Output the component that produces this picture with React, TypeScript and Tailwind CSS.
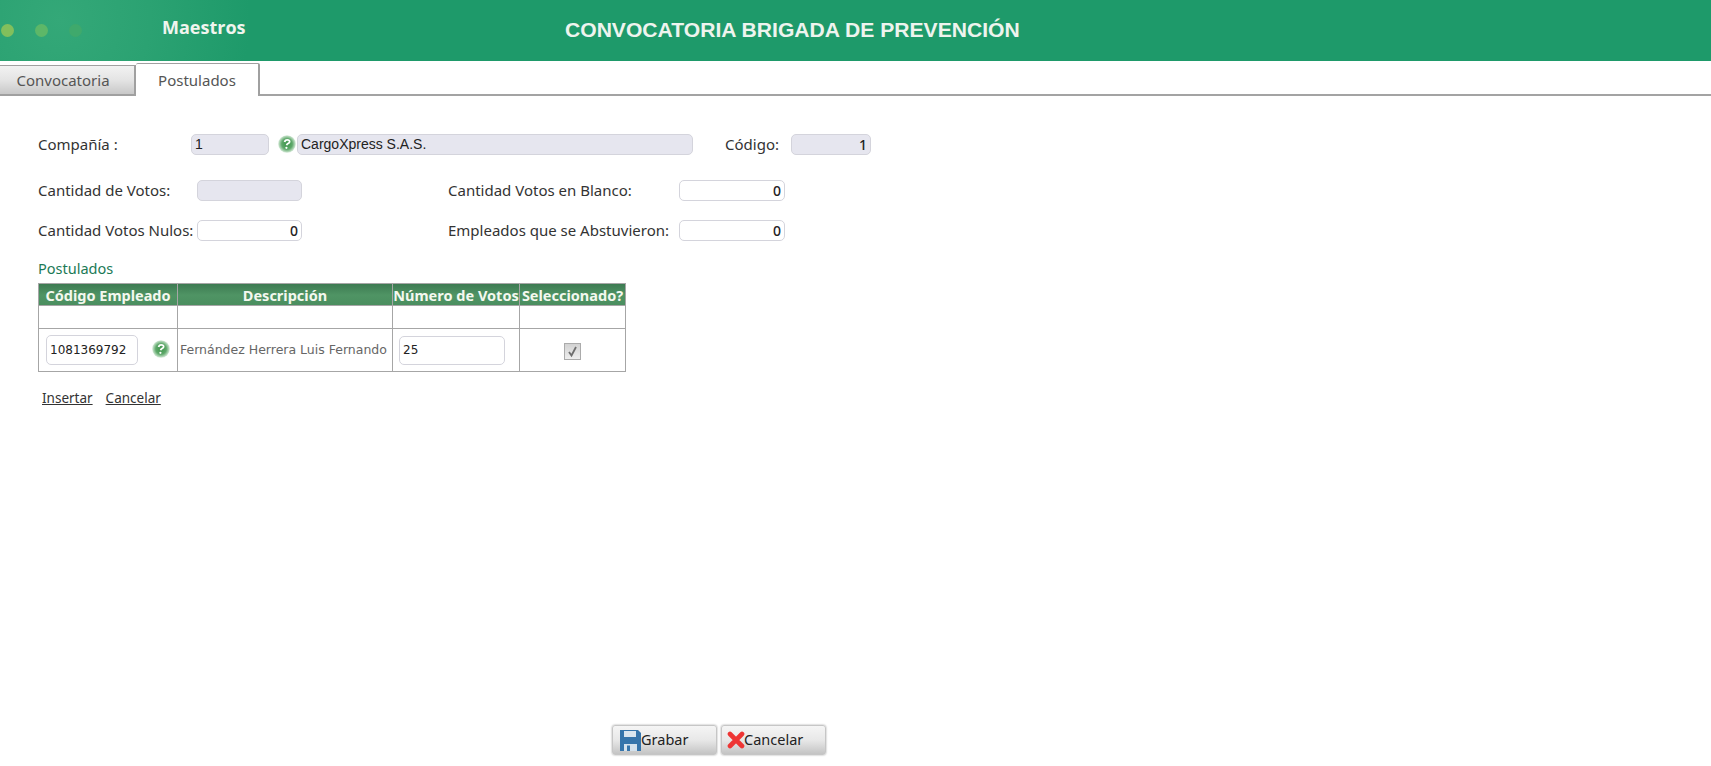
import React from 'react'

const fieldClass = 'h-[21px] rounded-[5px] border border-[#d4d4dc] px-[3px] text-[#222] outline-none'
const readOnlyClass = `${fieldClass} bg-[#e6e6ef]`
const editClass = `${fieldClass} bg-white`
const textFont = 'text-[14px] font-["Liberation_Sans",sans-serif]'
const numFont = 'text-right text-[14px] font-medium font-["Noto_Sans",sans-serif]'
const cellFont = 'text-[12px] font-["DejaVu_Sans",sans-serif]'

const HelpIcon = ({ id }: { id: string }) => (
  <svg width="18" height="18" viewBox="0 0 18 18" className="shrink-0">
    <defs>
      <radialGradient id={id} cx="50%" cy="50%" r="50%">
        <stop offset="0%" stopColor="#3c9549" />
        <stop offset="60%" stopColor="#5ea86a" />
        <stop offset="100%" stopColor="#d5ead8" />
      </radialGradient>
    </defs>
    <circle cx="9" cy="9" r="8.8" fill={`url(#${id})`} />
    <path d="M6.6 7C6.9 5.4 7.9 4.8 9.3 4.8c1.5 0 2.5.8 2.3 2-.3 1.8-2.6 1.8-3 3.5" fill="none" stroke="#fff" strokeWidth="1.8" />
    <circle cx="8.4" cy="12.8" r="1.1" fill="#fff" />
  </svg>
)

const SaveIcon = () => (
  <svg width="21" height="21" viewBox="0 0 21 21" className="shrink-0">
    <path d="M0 0h18l3 3v18H0z" fill="#3574ab" />
    <rect x="4" y="1" width="12" height="6" fill="#d9e5ef" />
    <rect x="4" y="14" width="13" height="7" fill="#d4e1ec" />
    <rect x="7" y="15.5" width="3" height="5.5" fill="#3574ab" />
  </svg>
)

const CancelIcon = () => (
  <svg width="18" height="18" viewBox="0 0 18 18" className="shrink-0">
    <path d="M3 3l12 12M15 3L3 15" stroke="#ee3534" strokeWidth="4.6" strokeLinecap="round" />
  </svg>
)

const App = () => {
  return (
    <div className='h-[766px] w-[1711px] overflow-hidden bg-white font-["Noto_Sans",sans-serif] text-[#333] flex flex-col'>
      <header className="h-[61px] shrink-0 flex items-center bg-[radial-gradient(circle_at_60px_20px,#34a878_0%,#2ba272_90px,#1e9a6a_190px)]">
        <div className="flex items-center gap-[21px] pl-[1px] w-[162px]">
          <span className="h-[13px] w-[13px] rounded-full bg-[#82bf5c]" />
          <span className="h-[13px] w-[13px] rounded-full bg-[#5db768]" />
          <span className="h-[13px] w-[13px] rounded-full bg-[#3fa96c]" />
        </div>
        <span className='w-[403px] -mt-[6px] text-[18px] font-bold text-[#f0f5ee] font-["Open_Sans",sans-serif]'>Maestros</span>
        <h1 className='-mt-[2px] text-[21.1px] font-bold text-[#eef4ee] font-["Liberation_Sans",sans-serif]'>CONVOCATORIA BRIGADA DE PREVENCIÓN</h1>
      </header>

      <nav className="h-[35px] shrink-0 flex items-end border-b-2 border-[#a3a3a3]">
        <button className="h-[31px] w-[136px] -mb-[2px] pr-[8px] border-b-2 border-r-2 border-t border-[#a0a0a0] text-[15px] text-[#555] bg-gradient-to-b from-[#f2f2f2] via-[#e4e4e4] to-[#c8c8c8]">
          Convocatoria
        </button>
        <button className="h-[33px] w-[124px] -mb-[2px] border-r-2 border-t border-[#a0a0a0] rounded-t-[2px] bg-white text-[15px] text-[#555]">
          Postulados
        </button>
      </nav>

      <main className="flex-1 flex flex-col pl-[38px] text-[15px] text-[#333]">
        <div className="mt-[37px] flex items-center h-[22px]">
          <label className="w-[153px]">Compañía :</label>
          <input readOnly value="1" className={`${readOnlyClass} ${textFont} w-[78px]`} />
          <span className="ml-[9px] mr-[1px]"><HelpIcon id="helpGlowTop" /></span>
          <input readOnly value="CargoXpress S.A.S." className={`${readOnlyClass} ${textFont} w-[396px]`} />
          <label className="ml-[32px] w-[66px]">Código:</label>
          <input readOnly value="1" className={`${readOnlyClass} ${numFont} w-[80px]`} />
        </div>

        <div className="mt-[24px] flex items-center h-[22px]">
          <label className="w-[159px] whitespace-nowrap">Cantidad de Votos:</label>
          <input readOnly value="" className={`${readOnlyClass} w-[105px]`} />
          <label className="ml-[146px] w-[231px] whitespace-nowrap">Cantidad Votos en Blanco:</label>
          <input readOnly value="0" className={`${editClass} ${numFont} w-[106px]`} />
        </div>

        <div className="mt-[18px] flex items-center h-[22px]">
          <label className="w-[159px] whitespace-nowrap">Cantidad Votos Nulos:</label>
          <input readOnly value="0" className={`${editClass} ${numFont} w-[105px]`} />
          <label className="ml-[146px] w-[231px] whitespace-nowrap">Empleados que se Abstuvieron:</label>
          <input readOnly value="0" className={`${editClass} ${numFont} w-[106px]`} />
        </div>

        <p className="mt-[17px] text-[14.5px] text-[#1b7a56] leading-[20px]">Postulados</p>

        <table className="mt-[5px] w-[587px] table-fixed border-collapse border border-[#a6a6a6]">
          <colgroup>
            <col className="w-[139px]" />
            <col className="w-[215px]" />
            <col className="w-[127px]" />
            <col className="w-[106px]" />
          </colgroup>
          <thead>
            <tr className="h-[22px] bg-gradient-to-b from-[#3d7a52] via-[#4f9464] to-[#4a8e5f] text-[#f4f8ef]">
              <th className="border border-[#a6a6a6] p-0 text-[14.5px] leading-[20px] font-bold whitespace-nowrap">Código Empleado</th>
              <th className="border border-[#a6a6a6] p-0 text-[14.5px] leading-[20px] font-bold">Descripción</th>
              <th className="border border-[#a6a6a6] p-0 text-[14.5px] leading-[20px] font-bold whitespace-nowrap">Número de Votos</th>
              <th className="border border-[#a6a6a6] p-0 text-[14.5px] leading-[20px] font-bold whitespace-nowrap">Seleccionado?</th>
            </tr>
          </thead>
          <tbody>
            <tr className="h-[23px]">
              <td className="border border-[#a6a6a6]" />
              <td className="border border-[#a6a6a6]" />
              <td className="border border-[#a6a6a6]" />
              <td className="border border-[#a6a6a6]" />
            </tr>
            <tr className="h-[43px]">
              <td className="border border-[#a6a6a6] pl-[7px]">
                <div className="flex items-center gap-[14px]">
                  <input readOnly value="1081369792" className={`${editClass} ${cellFont} w-[92px] h-[30px]`} />
                  <span className="-mt-[3px]"><HelpIcon id="helpGlowRow" /></span>
                </div>
              </td>
              <td className='border border-[#a6a6a6] pl-[2px] text-[12.5px] text-[#666] whitespace-nowrap font-["DejaVu_Sans",sans-serif]'>
                Fernández Herrera Luis Fernando
              </td>
              <td className="border border-[#a6a6a6] pl-[6px]">
                <input readOnly value="25" className={`${editClass} ${cellFont} w-[106px] h-[29px]`} />
              </td>
              <td className="border border-[#a6a6a6] text-center">
                <span className="inline-flex h-[17px] w-[17px] items-center justify-center border border-[#ababab] bg-gradient-to-b from-[#d2d2d2] to-[#eeeeee] align-middle">
                  <svg width="13" height="13" viewBox="0 0 13 13">
                    <path d="M3 7l2.5 3.5L10 2" fill="none" stroke="#6e6e6e" strokeWidth="1.8" />
                  </svg>
                </span>
              </td>
            </tr>
          </tbody>
        </table>

        <div className="mt-[16px] ml-[4px] flex gap-[13px] text-[13.5px] leading-[20px]">
          <a href="#" className="underline">Insertar</a>
          <a href="#" className="underline">Cancelar</a>
        </div>

        <div className="mt-auto mb-[11px] ml-[574px] flex gap-[4px]">
          <button className="h-[30px] w-[105px] flex items-center pl-[7px] rounded-[3px] border border-[#c6c6c6] shadow-[0_0_2px_#999] text-[14.5px] text-[#222] bg-gradient-to-b from-[#f5f5f5] via-[#e8e8e8] to-[#c4c4c4]">
            <SaveIcon />Grabar
          </button>
          <button className="h-[30px] w-[105px] flex items-center pl-[5px] rounded-[3px] border border-[#c6c6c6] shadow-[0_0_2px_#999] text-[14.5px] text-[#222] bg-gradient-to-b from-[#f5f5f5] via-[#e8e8e8] to-[#c4c4c4]">
            <CancelIcon /><span className="-ml-[1px]">Cancelar</span>
          </button>
        </div>
      </main>
    </div>
  )
}

export default App
